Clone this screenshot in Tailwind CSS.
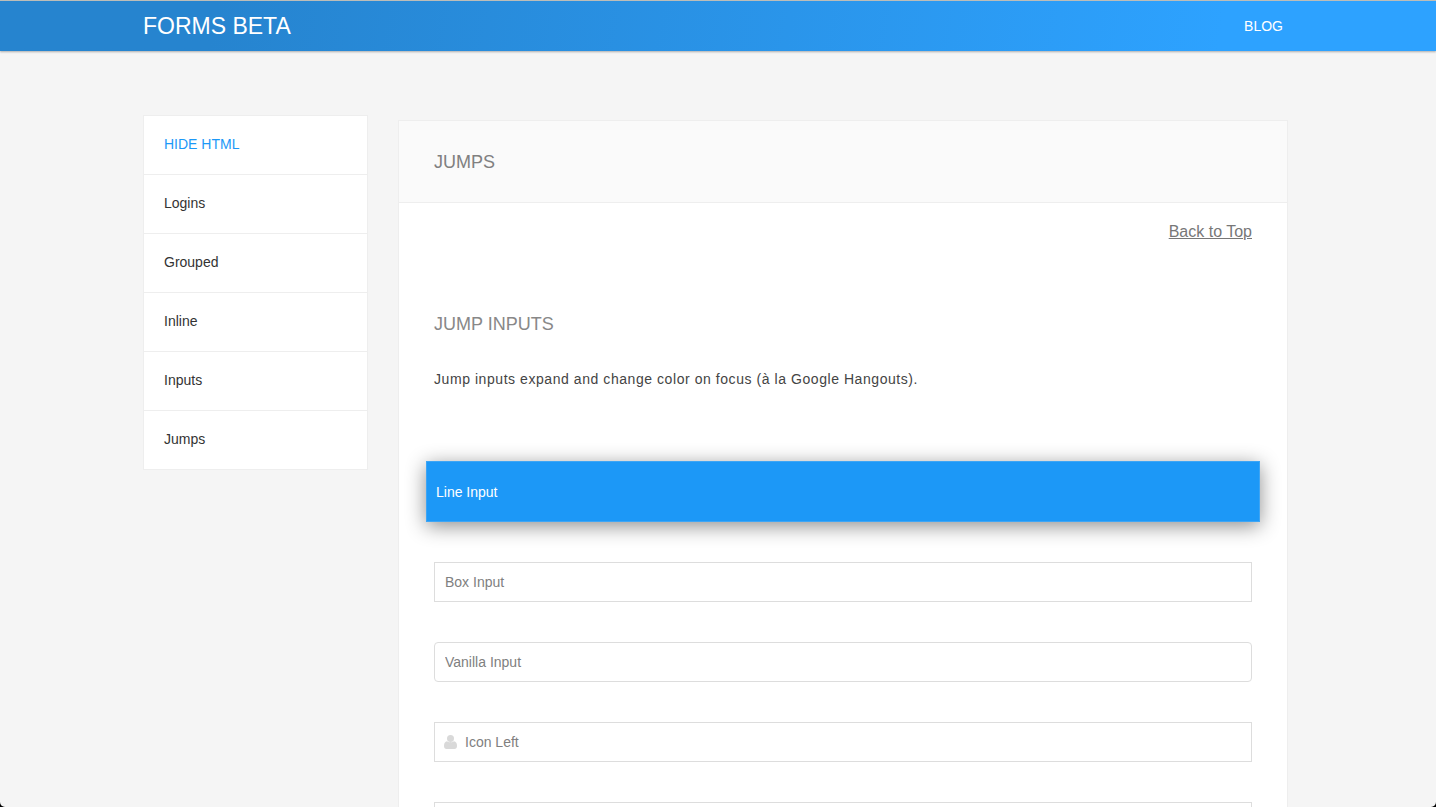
<!DOCTYPE html>
<html lang="en" class="h-full bg-black">
<head>
<meta charset="utf-8">
<meta name="viewport" content="width=device-width, initial-scale=1">
<title>Forms Beta</title>
<script src="https://cdn.jsdelivr.net/npm/@tailwindcss/browser@4"></script>
</head>
<body class="h-screen overflow-hidden rounded-b-[5px] bg-[#f5f5f5] font-['Liberation_Sans',Arial,sans-serif] text-sm text-[#333]">
  <header class="flex h-[51px] items-center justify-between border-t border-[#bdbdb8] bg-linear-100 from-[#2684cf] from-15% to-[#2da2ff] to-85% pr-[153px] pl-[143px] text-white shadow-[0_1px_2px_rgba(0,0,0,0.3)]">
    <a href="#top" class="text-[23px] leading-[50px]">FORMS BETA</a>
    <nav aria-label="Main"><a href="#blog">BLOG</a></nav>
  </header>

  <div class="flex items-start gap-[30px] pt-16 pr-[148px] pl-[143px]">
    <nav aria-label="Sections" class="w-[225px] shrink-0 border border-[#eee] bg-white">
      <ul class="divide-y divide-[#eee] leading-[56px]">
        <li><button type="button" class="block w-full cursor-pointer px-5 pb-[2px] text-left text-[#1c98f7]">HIDE HTML</button></li>
        <li><a href="#logins" class="block px-5 pb-[2px]">Logins</a></li>
        <li><a href="#grouped" class="block px-5 pb-[2px]">Grouped</a></li>
        <li><a href="#inline" class="block px-5 pb-[2px]">Inline</a></li>
        <li><a href="#inputs" class="block px-5 pb-[2px]">Inputs</a></li>
        <li><a href="#jumps" class="block px-5 pb-[2px]">Jumps</a></li>
      </ul>
    </nav>

    <main id="jumps" class="mt-[5px] min-w-0 flex-1 border border-[#eee] bg-white">
      <h1 class="border-b border-[#eee] bg-[#fafafa] px-[35px] pt-[2px] text-lg leading-[79px] text-[#808080]">JUMPS</h1>
      <div class="px-[35px] pt-[17px] pb-10">
        <p class="text-right text-base text-[#777]"><a href="#top" class="underline">Back to Top</a></p>
        <h2 class="mt-[62px] text-lg leading-9 text-[#888]">JUMP INPUTS</h2>
        <p class="mt-[19px] leading-9 tracking-[0.04em] text-[#444]">Jump inputs expand and change color on focus (à la Google Hangouts).</p>
        <form class="mt-16 flex flex-col gap-10">
          <input type="text" aria-label="Line Input" placeholder="Line Input" class="-mx-2 h-[61px] border border-[#3da5f5] bg-[#1c98f7] px-[9px] text-white shadow-[0_4px_20px_rgba(0,0,0,0.45)] outline-none placeholder:text-white">
          <input type="text" aria-label="Box Input" placeholder="Box Input" class="h-10 border border-[#ddd] px-[10px] outline-none placeholder:text-[#808080]">
          <input type="text" aria-label="Vanilla Input" placeholder="Vanilla Input" class="h-10 rounded border border-[#ddd] px-[10px] outline-none placeholder:text-[#808080]">
          <label class="flex h-10 items-center gap-2 border border-[#ddd] px-[9px]">
            <svg class="h-[14px] w-[13px] shrink-0" viewBox="0 0 13 14" fill="#d9d9d9" aria-hidden="true"><path d="M3 6.300C1 6.500 0 8.300 0 11c0 1.700 1 3 2.500 3h8c1.500 0 2.500-1.300 2.500-3 0-2.700-1-4.500-3-4.700A4.800 4.800 0 0 1 6.500 7.100 4.800 4.800 0 0 1 3 6.300Z"/><circle cx="6.500" cy="3.500" r="3.500"/></svg>
            <input type="text" aria-label="Icon Left" placeholder="Icon Left" class="min-w-0 flex-1 outline-none placeholder:text-[#808080]">
          </label>
          <input type="text" aria-label="Icon Right" class="h-10 border border-[#ddd] px-[10px] outline-none">
        </form>
      </div>
    </main>
  </div>
</body>
</html>
